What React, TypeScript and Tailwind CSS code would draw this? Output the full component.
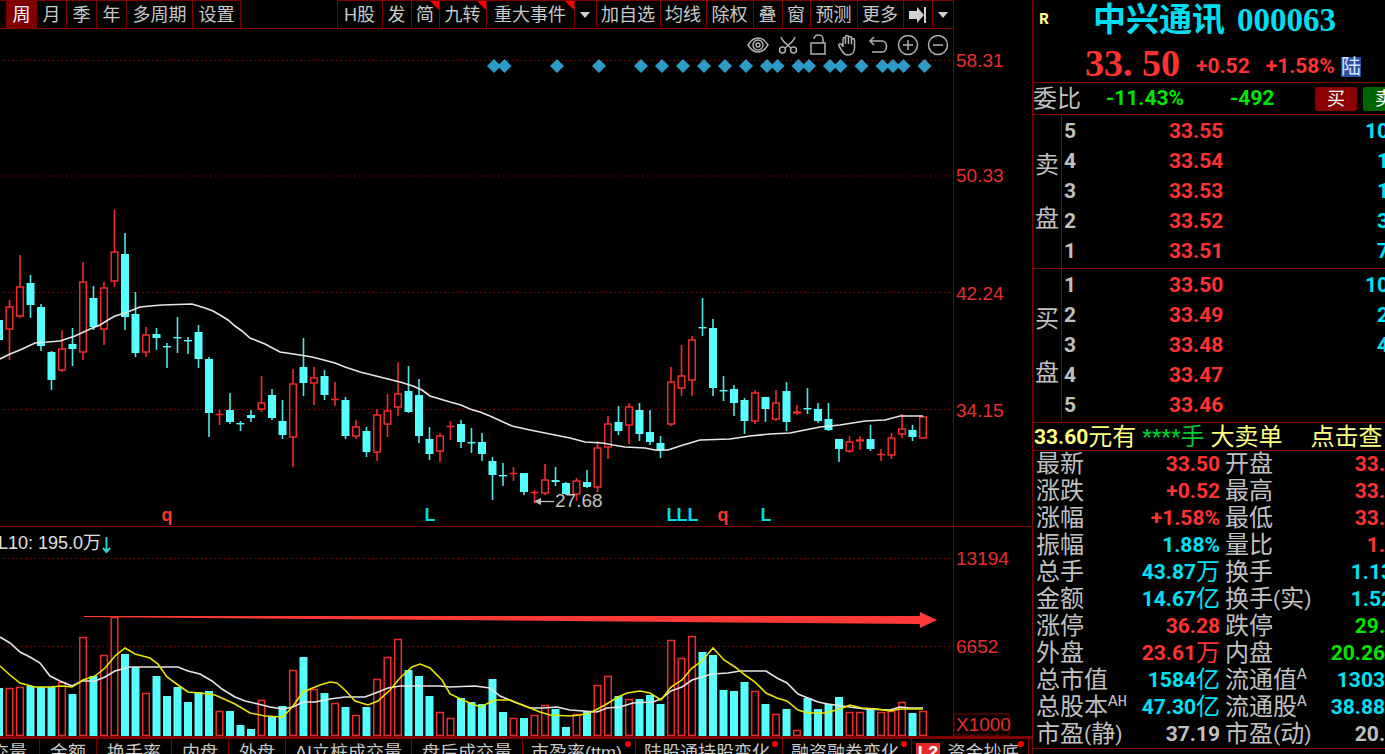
import React from 'react'
import clsx from 'clsx'

type Candle = ['r' | 'c', number, number, number, number, number]

// direction, high, body top, body bottom, low, volume top (first one sits at slot -1)
const candles: Candle[] = [
  ['c', 303, 320, 340, 345, 688],
  ['r', 300, 307, 329, 359, 688],
  ['r', 255, 287, 316, 317, 687],
  ['c', 275, 283, 305, 317, 686],
  ['c', 304, 307, 346, 350, 687],
  ['c', 351, 352, 380, 389, 687],
  ['r', 330, 349, 370, 371, 682],
  ['c', 344 - 16, 344, 349, 365, 694],
  ['r', 262, 282, 352, 359, 637],
  ['c', 286, 298, 327, 329, 676],
  ['r', 282, 288, 329, 344, 655],
  ['r', 210, 252, 281, 286, 617],
  ['c', 233, 254, 317, 329, 654],
  ['c', 292, 314, 353, 356, 667],
  ['r', 327, 335, 352, 356, 693],
  ['c', 328, 334, 338, 349, 676],
  ['c', 343, 346, 347, 367, 696],
  ['c', 317, 337, 338, 352, 687],
  ['c', 337, 340, 341, 353, 702],
  ['c', 325, 332, 359, 367, 692],
  ['c', 357, 359, 413, 436, 691],
  ['r', 410, 414, 415, 424, 711],
  ['c', 393, 410, 422, 423, 711],
  ['c', 421, 423, 424, 430, 725],
  ['c', 410, 415, 418, 421, 729],
  ['r', 376, 403, 409, 411, 700],
  ['c', 389, 395, 418, 419, 717],
  ['c', 400, 421, 435, 438, 706],
  ['r', 369, 384, 437, 466, 670],
  ['c', 338, 367, 383, 395, 657],
  ['r', 367, 378, 383, 404, 689],
  ['c', 370, 376, 395, 399, 693],
  ['r', 382, 399, 400, 405, 703],
  ['c', 397, 400, 436, 438, 707],
  ['r', 420, 427, 436, 438, 715],
  ['c', 427, 431, 452, 456, 707],
  ['r', 409, 415, 452, 460, 679],
  ['r', 394, 411, 424, 436, 657],
  ['r', 362, 394, 407, 415, 639],
  ['c', 366, 391, 412, 412, 670],
  ['c', 379, 395, 436, 442, 676],
  ['c', 427, 439, 454, 459, 696],
  ['r', 433, 436, 451, 461, 712],
  ['r', 421, 426, 427, 439, 718],
  ['c', 420, 424, 442, 447, 698],
  ['c', 428, 442, 443, 452, 702],
  ['c', 433, 442, 454, 460, 704],
  ['c', 457, 461, 475, 499, 679],
  ['c', 463, 475, 476, 485, 712],
  ['r', 467, 473, 474, 480, 718],
  ['c', 473, 473, 492, 494, 718],
  ['r', 490, 492, 493, 502, 715],
  ['r', 464, 480, 493, 494, 705],
  ['c', 467, 480, 482, 485, 709],
  ['c', 482, 483, 494, 494, 727],
  ['r', 478, 481, 494, 500, 714],
  ['c', 470, 482, 487, 487, 711],
  ['r', 441, 448, 487, 491, 685],
  ['r', 416, 424, 447, 458, 676],
  ['c', 406, 422, 431, 434, 696],
  ['r', 403, 407, 425, 443, 699],
  ['c', 403, 410, 434, 440, 699],
  ['c', 410, 432, 442, 444, 695],
  ['c', 436, 443, 451, 457, 704],
  ['r', 367, 382, 424, 425, 640],
  ['r', 345, 376, 388, 395, 658],
  ['r', 336, 340, 380, 395, 636],
  ['c', 298, 327, 328, 335, 652],
  ['c', 319, 328, 388, 395, 655],
  ['c', 376, 390, 391, 400, 690],
  ['c', 385, 389, 403, 415, 691],
  ['c', 398, 400, 421, 433, 682],
  ['r', 390, 393, 421, 423, 691],
  ['c', 397, 397, 409, 421, 704],
  ['r', 390, 403, 419, 420, 714],
  ['c', 382, 391, 422, 430, 709],
  ['r', 405, 412, 414, 414, 730],
  ['c', 388, 408, 409, 413, 698],
  ['c', 403, 409, 421, 422, 709],
  ['c', 403, 419, 430, 430, 704],
  ['c', 439, 439, 449, 461, 697],
  ['r', 436, 442, 451, 452, 712],
  ['r', 436, 440, 442, 449, 712],
  ['c', 425, 439, 449, 450, 709],
  ['r', 449, 454, 455, 460, 712],
  ['r', 433, 438, 455, 458, 711],
  ['r', 414, 429, 434, 437, 702],
  ['c', 425, 430, 437, 440, 713],
  ['r', 416, 417, 438, 438, 711],
]

const priceMa =
  '0,359 10,354 20,350 35,343 48,342 60,341 75,336 90,329 100,325 108,320 115,316 125,313 140,307 150,306 162,305 192,304 205,308 213,311 220,315 228,320 235,326 242,331 250,338 265,344 280,352 300,355 312,357 320,359 335,363 345,367 360,372 380,377 400,382 413,386 422,390 430,396 450,402 461,405 470,409 480,412 490,416 501,421 512,426 530,430 550,434 570,438 585,442 603,443 613,445 625,447 645,448 655,450 668,450 680,446 690,443 700,440 730,439 750,436 770,434 790,433 805,430 820,427 840,425 865,421 885,420 900,416 923,416'

const volumeFast =
  '0,666 10,675 20,683 35,687 50,687 62,686 72,687 83,680 95,676 105,668 115,656 125,648 135,654 150,658 158,664 167,677 178,685 188,692 200,693 215,695 235,704 250,713 265,716 283,717 293,706 303,692 320,685 330,682 337,683 345,690 355,701 368,705 378,701 390,690 400,678 412,667 420,664 430,668 442,680 450,694 465,701 480,707 495,700 510,700 525,706 540,712 550,715 570,716 580,715 590,713 605,705 618,697 627,693 640,691 650,693 661,700 671,687 682,680 692,668 702,661 713,648 724,660 735,667 745,675 755,682 766,693 777,698 787,701 798,710 808,713 825,713 840,709 850,705 862,708 877,709 890,711 900,709 923,709'

const volumeSlow =
  '0,637 10,643 20,652 30,657 40,663 50,676 60,681 72,686 82,681 95,681 105,677 115,671 130,667 178,667 188,671 200,674 212,681 222,689 235,697 245,701 258,704 270,707 283,709 293,707 303,702 315,702 330,699 345,697 365,697 378,692 388,688 400,686 440,686 450,687 475,686 490,688 500,696 517,703 530,708 543,708 557,707 570,710 583,711 597,712 607,708 620,707 633,703 653,702 661,699 671,691 682,687 692,680 702,677 712,674 728,673 740,671 766,671 777,678 787,683 798,694 808,698 818,702 828,704 842,706 865,709 890,710 900,707 910,708 923,708'

const eventSlots = [
  46, 47, 52, 56, 60, 62, 64, 66, 68, 70, 72, 73, 75, 76, 78, 79, 81, 83, 84,
  85, 87,
]

const slotX = (slot: number) => 9.5 + slot * 10.5

const periods = [
  { label: '周', width: 'w-[30px]', active: true },
  { label: '月', width: 'w-[30px]' },
  { label: '季', width: 'w-[30px]' },
  { label: '年', width: 'w-[30px]' },
  { label: '多周期', width: 'w-[66px]' },
  { label: '设置', width: 'w-[49px] border-r' },
]

const tools = [
  { label: 'H股', width: 'w-[45px]' },
  { label: '发', width: 'w-[29px]' },
  { label: '简', width: 'w-[28px]', flag: true },
  { label: '九转', width: 'w-[47px]', flag: true },
  { label: '重大事件', width: 'w-[88px]', flag: true },
  { label: '事件菜单', width: 'w-[22px]', icon: 'caret' },
  { label: '加自选', width: 'w-[64px]' },
  { label: '均线', width: 'w-[46px]' },
  { label: '除权', width: 'w-[47px]' },
  { label: '叠', width: 'w-[29px]' },
  { label: '窗', width: 'w-[28px]' },
  { label: '预测', width: 'w-[47px]' },
  { label: '更多', width: 'w-[46px]' },
  { label: '移到最右', width: 'w-[29px]', icon: 'end' },
  { label: '工具菜单', width: 'w-[22px] border-r', icon: 'caret' },
]

const tabs = [
  { label: '成交量', width: 'w-[39px] justify-end pr-3' },
  { label: '金额', width: 'w-[57px] justify-center border-l' },
  { label: '换手率', width: 'w-[75px] justify-center border-l' },
  { label: '内盘', width: 'w-[57px] justify-center border-l' },
  { label: '外盘', width: 'w-[57px] justify-center border-l' },
  { label: 'AI立桩成交量', width: 'w-[126px] justify-center border-l' },
  { label: '盘后成交量', width: 'w-[111px] justify-center border-l' },
  { label: '市盈率(ttm)', width: 'w-[113px] pl-2 border-l', dot: true },
  { label: '陆股通持股变化', width: 'w-[147px] pl-2 border-l', dot: true },
  { label: '融资融券变化', width: 'w-[129px] pl-2 border-l', dot: true },
  { label: '资金抄底', width: 'w-[118px] pl-1 border-x', dot: true, level2: true },
]

const asks = [
  ['5', '33.55', '10'],
  ['4', '33.54', '1'],
  ['3', '33.53', '1'],
  ['2', '33.52', '3'],
  ['1', '33.51', '7'],
]

const bids = [
  ['1', '33.50', '10'],
  ['2', '33.49', '2'],
  ['3', '33.48', '4'],
  ['4', '33.47', ''],
  ['5', '33.46', ''],
]

const RED = 'text-[#ff3232]'
const CYAN = 'text-[#00e1f5]'
const GREEN = 'text-[#00e600]'
const GREY = 'text-[#c0c0c0]'

type Quote = { label: string; sup?: string; value: string; color: string }

const quotes: [Quote, Quote][] = [
  [
    { label: '最新', value: '33.50', color: RED },
    { label: '开盘', value: '33.', color: RED },
  ],
  [
    { label: '涨跌', value: '+0.52', color: RED },
    { label: '最高', value: '33.', color: RED },
  ],
  [
    { label: '涨幅', value: '+1.58%', color: RED },
    { label: '最低', value: '33.', color: RED },
  ],
  [
    { label: '振幅', value: '1.88%', color: CYAN },
    { label: '量比', value: '1.', color: RED },
  ],
  [
    { label: '总手', value: '43.87万', color: CYAN },
    { label: '换手', value: '1.13', color: CYAN },
  ],
  [
    { label: '金额', value: '14.67亿', color: CYAN },
    { label: '换手(实)', value: '1.52', color: CYAN },
  ],
  [
    { label: '涨停', value: '36.28', color: RED },
    { label: '跌停', value: '29.', color: GREEN },
  ],
  [
    { label: '外盘', value: '23.61万', color: RED },
    { label: '内盘', value: '20.26', color: GREEN },
  ],
  [
    { label: '总市值', value: '1584亿', color: CYAN },
    { label: '流通值', sup: 'A', value: '1303', color: CYAN },
  ],
  [
    { label: '总股本', sup: 'AH', value: '47.30亿', color: CYAN },
    { label: '流通股', sup: 'A', value: '38.88', color: CYAN },
  ],
  [
    { label: '市盈(静)', value: '37.19', color: GREY },
    { label: '市盈(动)', value: '20.', color: GREY },
  ],
]

function ToolIcon({ name }: { name: string }) {
  if (name === 'caret') {
    return (
      <svg viewBox="0 0 10 6" className="w-2.5 fill-[#d0d0d0]">
        <path d="M0 0h10L5 6z" />
      </svg>
    )
  }
  return (
    <svg viewBox="0 0 20 16" className="w-5 fill-[#d0d0d0]">
      <path d="M1 4h8V0l7 8-7 8v-4H1zM16 0h2v16h-2z" />
    </svg>
  )
}

function Toolbar() {
  return (
    <div className="flex h-[29px] w-[92.4%] shrink-0 border-b border-[#800000]">
      <div className="flex border-t border-[#800000] pl-1.5">
        {periods.map((period) => (
          <button
            key={period.label}
            className={clsx(
              'border-l border-[#800000] text-lg leading-none whitespace-nowrap',
              period.width,
              period.active && 'bg-[#800000] text-white',
            )}
          >
            {period.label}
          </button>
        ))}
      </div>
      <div className="ml-auto flex border-t border-[#800000]">
        {tools.map((tool) => (
          <button
            key={tool.label}
            aria-label={tool.label}
            className={clsx(
              'relative flex items-center justify-center border-l border-[#800000] text-lg leading-none whitespace-nowrap',
              tool.width,
            )}
          >
            {tool.icon ? <ToolIcon name={tool.icon} /> : tool.label}
            {tool.flag && (
              <svg
                viewBox="0 0 9 9"
                className="absolute top-0 right-0 w-[9px] fill-[#ff0000]"
              >
                <path d="M0 0h9v9z" />
              </svg>
            )}
          </button>
        ))}
      </div>
    </div>
  )
}

const drawTools = [
  {
    label: '显示',
    shape: (
      <>
        <path d="M1 11C4 6 7.500 4 11 4s7 2 10 7c-3 5-6.500 7-10 7s-7-2-10-7z" />
        <circle cx="11" cy="11" r="5" />
        <circle cx="11" cy="11" r="2" />
      </>
    ),
  },
  {
    label: '剪切',
    shape: (
      <>
        <path d="M4 3c1 4 4 6 10 11M18 3c-1 4-4 6-10 11" />
        <circle cx="5.500" cy="16" r="3" />
        <circle cx="16.500" cy="16" r="3" />
      </>
    ),
  },
  {
    label: '锁定',
    shape: <path d="M4 9h14v11H4zM7 5c0-2 2-4 4-4s5 1 5 4v4" />,
  },
  {
    label: '拖动',
    shape: (
      <path d="M6 13V5c0-2 2.500-2 2.500 0v5V3c0-2 3-2 3 0v7V4c0-2 3-2 3 0v6.500V6c0-2 3-2 3 0v8c0 4-2.500 7-6.500 7-3 0-4.500-1.500-6-4L2 12c-1-1.500 1-3 2.500-1.500L6 12.500" />
    ),
  },
  {
    label: '撤销',
    shape: <path d="M7 3 3 7l4 4M3 7h12c6 0 6 11 0 11H5" />,
  },
  {
    label: '放大',
    shape: (
      <>
        <circle cx="11" cy="11" r="9.500" />
        <path d="M6 11h10M11 6v10" />
      </>
    ),
  },
  {
    label: '缩小',
    shape: (
      <>
        <circle cx="11" cy="11" r="9.500" />
        <path d="M6 11h10" />
      </>
    ),
  },
]

function DrawTools() {
  return (
    <div className="absolute top-[5px] right-[79px] flex">
      {drawTools.map((tool) => (
        <button
          key={tool.label}
          aria-label={tool.label}
          className="flex w-[30px] justify-center"
        >
          <svg
            viewBox="0 0 22 22"
            className="w-[22px] fill-none stroke-[#b0b0b0] stroke-[1.5]"
          >
            {tool.shape}
          </svg>
        </button>
      ))}
    </div>
  )
}

function GridLine({ y }: { y: number }) {
  return (
    <line
      x1="3"
      x2="950"
      y1={y}
      y2={y}
      strokeDasharray="1.5 3"
      className="stroke-[#a00000]"
    />
  )
}

function AxisLabel({ y, children }: { y: number; children: string }) {
  return (
    <text x="956" y={y} className="fill-[#e62e2e] text-[19px]">
      {children}
    </text>
  )
}

function Marker({ x, kind }: { x: number; kind: string }) {
  return (
    <text
      x={x}
      y="521"
      textAnchor="middle"
      className={clsx(
        'text-lg font-bold',
        kind === 'q' ? 'fill-[#ff3232]' : 'fill-[#00dce6]',
      )}
    >
      {kind}
    </text>
  )
}

function PriceChart() {
  return (
    <div className="relative border-b border-[#800000]">
      <svg viewBox="0 29 1032 497" className="block w-full">
        <GridLine y={60.5} />
        <GridLine y={176} />
        <GridLine y={292.5} />
        <GridLine y={409.5} />
        <AxisLabel y={67}>58.31</AxisLabel>
        <AxisLabel y={182}>50.33</AxisLabel>
        <AxisLabel y={300}>42.24</AxisLabel>
        <AxisLabel y={417}>34.15</AxisLabel>
        <path d="M953.500 0V526" className="stroke-[#800000]" />

        {eventSlots.map((slot) => (
          <path
            key={slot}
            d={`M${slotX(slot) + 1.5} 59l7 7-7 7-7-7z`}
            className="fill-[#2d9bc8]"
          />
        ))}

        {candles.map(([kind, high, top, bottom, low], index) => {
          const x = slotX(index - 1)
          const body = bottom - top
          if (kind === 'c') {
            return (
              <g key={index} className="fill-[#55ffff] stroke-[#4fe6e6]">
                <path d={`M${x} ${high}V${low + 1}`} strokeWidth="1.6" />
                <rect
                  x={x - 4}
                  y={top}
                  width="8"
                  height={Math.max(body, 1.4)}
                  stroke="none"
                  strokeWidth="0"
                />
              </g>
            )
          }
          return (
            <g key={index} className="fill-none stroke-[#f02b2b]">
              <path
                d={`M${x} ${high}V${top}M${x} ${bottom}V${low + 1}`}
                strokeWidth="1.6"
              />
              {body > 2 ? (
                <rect
                  x={x - 3.3}
                  y={top}
                  width="6.6"
                  height={body}
                  strokeWidth="1.5"
                />
              ) : (
                <path d={`M${x - 4} ${top + 0.5}h8`} strokeWidth={body + 0.5} />
              )}
            </g>
          )
        })}

        <polyline
          points={priceMa}
          className="fill-none stroke-[#e6e6e6] stroke-[1.6]"
        />

        <path d="M540 501.500h14" className="stroke-[#c0c0c0] stroke-[1.3]" />
        <path d="M534 501.500l7-3.500v7z" className="fill-[#c0c0c0]" />
        <text x="555" y="507" className="fill-[#c0c0c0] text-[19px]">
          27.68
        </text>

        <Marker x={167} kind="q" />
        <Marker x={430} kind="L" />
        <Marker x={672} kind="L" />
        <Marker x={682} kind="L" />
        <Marker x={693} kind="L" />
        <Marker x={723} kind="q" />
        <Marker x={766} kind="L" />
      </svg>
      <DrawTools />
    </div>
  )
}

function VolumeChart() {
  return (
    <div className="border-b-3 border-[#800000]">
      <svg viewBox="0 527 1032 209" className="block w-full">
        <GridLine y={558.5} />
        <GridLine y={646.5} />
        <AxisLabel y={565}>13194</AxisLabel>
        <AxisLabel y={653}>6652</AxisLabel>
        <path d="M953.500 527V736" className="stroke-[#800000]" />
        <rect
          x="954"
          y="714"
          width="55"
          height="21"
          className="fill-none stroke-[#800000]"
        />
        <AxisLabel y={731}>X1000</AxisLabel>

        <text
          x="101"
          y="549"
          textAnchor="end"
          className="fill-[#e0e0e0] text-lg"
        >
          VOL10: 195.0万
        </text>
        <path
          d="M106.500 537v14M103 548l3.500 4 3.500-4"
          className="fill-none stroke-[#2fd0d0] stroke-2"
        />

        {candles.map(([kind, , , , , top], index) => {
          const x = slotX(index - 1)
          return kind === 'c' ? (
            <rect
              key={index}
              x={x - 4}
              y={top}
              width="8"
              height={736 - top}
              className="fill-[#55ffff]"
            />
          ) : (
            <rect
              key={index}
              x={x - 3.3}
              y={top + 0.5}
              width="6.6"
              height={735 - top}
              className="fill-none stroke-[#f02b2b] stroke-[1.5]"
            />
          )
        })}

        <polyline
          points={volumeSlow}
          className="fill-none stroke-[#e6e6e6] stroke-[1.6]"
        />
        <polyline
          points={volumeFast}
          className="fill-none stroke-[#e6e600] stroke-[1.6]"
        />

        <path
          d="M84 616H920V612L937 620 920 628V624L84 617z"
          className="fill-[#ff3838]"
        />
      </svg>
    </div>
  )
}

function IndicatorTabs() {
  return (
    <div className="flex shrink-0">
      {tabs.map((tab) => (
        <button
          key={tab.label}
          className={clsx(
            'relative flex h-7 items-center border-[#800000] text-lg leading-none whitespace-nowrap',
            tab.width,
          )}
        >
          {tab.level2 && (
            <span className="mr-2 bg-[#e62828] px-px font-['Liberation_Mono',monospace] leading-5 font-bold text-white">
              L2
            </span>
          )}
          {tab.label}
          {tab.dot && (
            <span className="absolute top-0.5 right-1 size-1.5 rounded-full bg-[#ff0000]" />
          )}
        </button>
      ))}
    </div>
  )
}

function OrderSide({ name, rows }: { name: string; rows: string[][] }) {
  return (
    <div className="flex border-t border-[#800000]">
      <div className="flex w-7 shrink-0 flex-col items-center gap-[30px] pt-[38px] text-2xl leading-6">
        {name.split('').map((char) => (
          <span key={char}>{char}</span>
        ))}
      </div>
      <div className="flex-1 border-l border-[#800000] pt-px pb-0.5">
        <table className="w-full table-fixed text-[21px] leading-[30px] font-bold">
          <tbody>
            {rows.map(([level, price, volume]) => (
              <tr key={level} className="h-[30px]">
                <th className="w-[107px] p-0 pl-0.5 text-left">{level}</th>
                <td className={clsx('p-0', RED)}>{price}</td>
                <td className={clsx('w-[21px] p-0', CYAN)}>
                  <div className="-mr-1 flex justify-end">{volume}</div>
                </td>
              </tr>
            ))}
          </tbody>
        </table>
      </div>
    </div>
  )
}

function QuoteLabel({ quote }: { quote: Quote }) {
  const [name, note] = quote.label.split(/[()]/)
  return (
    <div className="flex text-2xl leading-[27px] font-normal whitespace-nowrap">
      {name}
      {note && (
        <>
          <span className="text-[21px]">(</span>
          {note}
          <span className="text-[21px]">)</span>
        </>
      )}
      {quote.sup && (
        <sup className="top-0 font-['Liberation_Mono',monospace] text-base leading-4">
          {quote.sup}
        </sup>
      )}
    </div>
  )
}

function QuotePanel() {
  return (
    <aside className="w-[353px] shrink-0 overflow-hidden border-l border-[#800000] font-['Roboto','Noto_Sans_CJK_SC',sans-serif] text-[#c0c0c0]">
      <header className="border-b border-[#800000]">
        <div className="flex h-10 items-center whitespace-nowrap">
          <span className="w-[60px] pl-1.5 font-['Liberation_Mono',monospace] text-base font-bold text-[#ffff80]">
            R
          </span>
          <h1 className="flex gap-3 font-['Liberation_Serif','Noto_Sans_CJK_SC',serif] text-[33px] leading-10 font-bold text-[#00dcf0]">
            <span>中兴通讯</span>
            <span>000063</span>
          </h1>
        </div>
        <div
          className={clsx(
            'flex h-[42px] items-center pl-[52px] text-[21px] font-bold whitespace-pre',
            RED,
          )}
        >
          <span className="pt-1 font-['Liberation_Serif',serif] text-[38px] leading-9">
            33. 50
          </span>
          <span className="mt-3 ml-4">+0.52</span>
          <span className="mt-3 ml-4">+1.58%</span>
          <span className="mt-3 ml-1.5 bg-[#2850a0] text-xl leading-5 font-normal text-[#d8e4ff]">
            陆
          </span>
        </div>
      </header>

      <div className="flex h-[31px] items-center text-[21px] font-bold whitespace-nowrap">
        <span className="w-[73px] shrink-0 text-2xl font-normal">委比</span>
        <span className={clsx('w-[124px] shrink-0', GREEN)}>-11.43%</span>
        <span className={clsx('w-[85px] shrink-0', GREEN)}>-492</span>
        <button className="h-6 w-[42px] shrink-0 rounded-xs bg-[#8b0000] text-lg leading-6 font-normal text-white">
          买
        </button>
        <button className="ml-1.5 h-6 w-[42px] shrink-0 rounded-xs bg-[#006400] text-lg leading-6 font-normal text-white">
          卖
        </button>
      </div>

      <OrderSide name="卖盘" rows={asks} />
      <OrderSide name="买盘" rows={bids} />

      <div className="flex h-[29px] items-center border-y border-[#800000] pl-px text-2xl leading-7 whitespace-nowrap text-[#ffff80]">
        <strong className="text-[21px]">33.60</strong>
        <span>元有</span>
        <span className="ml-1.5 flex text-[#00c832]">
          <strong className="text-[21px]">****</strong>手
        </span>
        <span className="ml-1.5">大卖单</span>
        <a href="#orders" className="ml-7">
          点击查
        </a>
      </div>

      <table className="w-full table-fixed border-b border-[#800000]">
        <tbody>
          {quotes.map((pair) => (
            <tr key={pair[0].label} className="h-[27px]">
              {pair.map((quote, index) => (
                <React.Fragment key={quote.label}>
                  <th
                    className={clsx(
                      'w-[95px] p-0',
                      index ? 'pl-[5px]' : 'pl-[3px]',
                    )}
                  >
                    <QuoteLabel quote={quote} />
                  </th>
                  <td
                    className={clsx(
                      'p-0 text-[21px] leading-[27px] font-bold whitespace-nowrap',
                      index === 0 && 'w-[92px]',
                      quote.color,
                    )}
                  >
                    <div
                      className={clsx(
                        'flex justify-end',
                        quote.value.startsWith('1.') &&
                          quote.value.length === 4 &&
                          '-mr-2',
                      )}
                    >
                      {quote.value.replace(/[万亿]/, '')}
                      {/[万亿]/.test(quote.value) && (
                        <span className="text-2xl leading-[27px] font-normal">
                          {quote.value.slice(-1)}
                        </span>
                      )}
                    </div>
                  </td>
                </React.Fragment>
              ))}
            </tr>
          ))}
        </tbody>
      </table>
    </aside>
  )
}

function App() {
  return (
    <div className="flex h-screen overflow-hidden bg-black font-['Liberation_Sans','Noto_Sans_CJK_SC',sans-serif] text-[#c8c8c8]">
      <main className="flex min-w-0 flex-1 flex-col overflow-hidden">
        <Toolbar />
        <PriceChart />
        <VolumeChart />
        <IndicatorTabs />
      </main>
      <QuotePanel />
    </div>
  )
}

export default App
